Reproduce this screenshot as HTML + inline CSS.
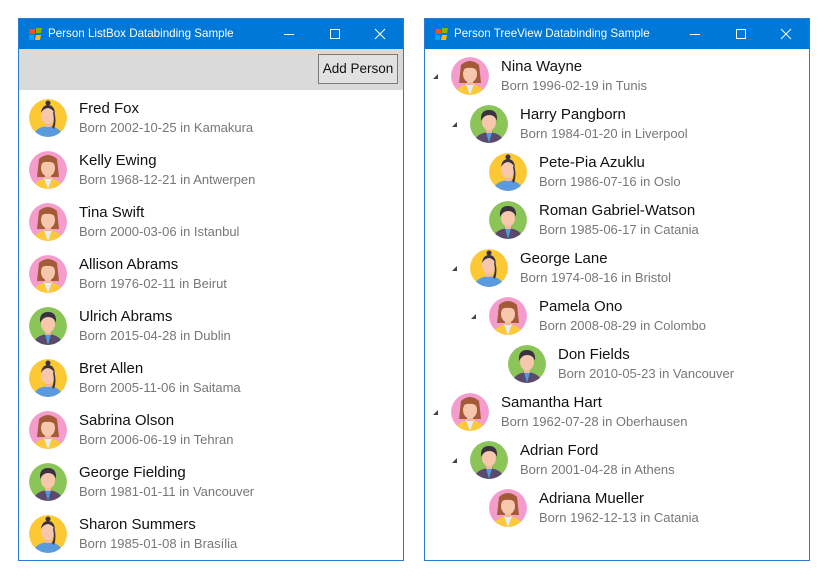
<!DOCTYPE html>
<html><head><meta charset="utf-8"><style>
body{margin:0;width:831px;height:581px;background:#fff;position:relative;overflow:hidden;font-family:"Segoe UI","Liberation Sans",sans-serif}
.win{position:absolute;top:18px;width:384px;height:541px;border:1px solid #2b7bd0;background:#fff}
.tb{position:absolute;left:0;top:0;right:0;height:30px;background:#0078d7;color:#fff;font-size:11.6px}
.tb .t{position:absolute;left:29px;top:8px}
.logo{position:absolute;left:10px;top:9px;width:13px;height:12px}
.ctl{position:absolute;top:0;height:30px;width:46px}
.tool{position:absolute;left:0;right:0;top:30px;height:41px;background:#dadada}
.btn{position:absolute;right:5px;top:5px;width:78px;height:28px;border:1px solid #7a7a7a;background:#e1e1e1;font-size:13.5px;line-height:28px;text-align:center;color:#111}
.it{position:absolute;height:48px}
.it svg{position:absolute;left:0;top:0;width:38px;height:38px}
.n{position:absolute;left:50px;top:1px;font-size:15px;color:#111;white-space:nowrap}
.s{position:absolute;left:50px;top:21px;font-size:13px;color:#777;white-space:nowrap}
.ar{position:absolute;width:0;height:0;border-left:5px solid transparent;border-bottom:5px solid #444}
</style></head><body>
<svg width="0" height="0" style="position:absolute">
<defs>
<clipPath id="c"><circle cx="19" cy="19" r="19"/></clipPath>
<symbol id="y" viewBox="0 0 38 38"><g clip-path="url(#c)"><circle cx="19" cy="19" r="19" fill="#fcc934"/><path d="M4 38 Q6 28 19 27 Q32 28 34 38Z" fill="#5a9be0"/><rect x="16" y="22" width="6" height="6" fill="#f2b79a"/><ellipse cx="19" cy="16" rx="7" ry="9" fill="#f7c7ad"/><path d="M12 14 Q13 6 19 6 Q25 6 26 14 Q22 9 19 9 Q15 9 12 14Z" fill="#3a3240"/><circle cx="19" cy="4" r="2.5" fill="#3a3240"/><path d="M25 12 Q28 22 25 30 L23 28 Q26 22 24 14Z" fill="#3a3240"/></g></symbol>
<symbol id="p" viewBox="0 0 38 38"><g clip-path="url(#c)"><circle cx="19" cy="19" r="19" fill="#f49ccc"/><path d="M10 8 Q19 0 28 8 L30 26 L8 26Z" fill="#a35a36"/><path d="M4 38 Q6 28 19 27 Q32 28 34 38Z" fill="#fbc93a"/><path d="M15 27 L19 38 L23 27Z" fill="#e3ecf7"/><rect x="16" y="22" width="6" height="6" fill="#f2b79a"/><ellipse cx="19" cy="17" rx="7" ry="8.5" fill="#f7c7ad"/><path d="M11 14 Q14 6 19 7 Q24 6 27 14 Q22 10 19 11 Q15 10 11 14Z" fill="#a35a36"/></g></symbol>
<symbol id="g" viewBox="0 0 38 38"><g clip-path="url(#c)"><circle cx="19" cy="19" r="19" fill="#8cc557"/><path d="M4 38 Q6 28 19 27 Q32 28 34 38Z" fill="#5c4a6e"/><path d="M16 27 L19 38 L22 27Z" fill="#4a9de0"/><rect x="16" y="22" width="6" height="6" fill="#f2b79a"/><ellipse cx="19" cy="17" rx="7" ry="8.5" fill="#f7c7ad"/><path d="M11 16 Q10 5 19 5 Q28 5 27 16 Q25 10 19 10 Q14 10 11 16Z" fill="#3a3240"/></g></symbol>
</defs></svg>

<div class="win" style="left:18px">
<div class="tb"><svg class="logo" viewBox="0 0 13 12"><path d="M1 1h5v5H0z" fill="#f25022"/><path d="M7 0h6l-1 5H7z" fill="#7fba00"/><path d="M0 7h5v5H0z" fill="#00a4ef"/><path d="M7 7h5l-1 5H6z" fill="#ffb900"/></svg><span class="t">Person ListBox Databinding Sample</span>
<svg class="ctl" style="left:247px" viewBox="0 0 46 30"><path d="M18 15.5h10" stroke="#fff"/></svg>
<svg class="ctl" style="left:293px" viewBox="0 0 46 30"><rect x="18.5" y="10.5" width="9" height="9" fill="none" stroke="#fff"/></svg>
<svg class="ctl" style="left:338px" viewBox="0 0 46 30"><path d="M18 10l10 10M28 10l-10 10" stroke="#fff"/></svg></div>
<div class="tool"><div class="btn">Add Person</div></div>
<div class="it" style="left:10px;top:80px"><svg><use href="#y"/></svg><div class="n">Fred Fox</div><div class="s">Born 2002-10-25 in Kamakura</div></div>
<div class="it" style="left:10px;top:132px"><svg><use href="#p"/></svg><div class="n">Kelly Ewing</div><div class="s">Born 1968-12-21 in Antwerpen</div></div>
<div class="it" style="left:10px;top:184px"><svg><use href="#p"/></svg><div class="n">Tina Swift</div><div class="s">Born 2000-03-06 in Istanbul</div></div>
<div class="it" style="left:10px;top:236px"><svg><use href="#p"/></svg><div class="n">Allison Abrams</div><div class="s">Born 1976-02-11 in Beirut</div></div>
<div class="it" style="left:10px;top:288px"><svg><use href="#g"/></svg><div class="n">Ulrich Abrams</div><div class="s">Born 2015-04-28 in Dublin</div></div>
<div class="it" style="left:10px;top:340px"><svg><use href="#y"/></svg><div class="n">Bret Allen</div><div class="s">Born 2005-11-06 in Saitama</div></div>
<div class="it" style="left:10px;top:392px"><svg><use href="#p"/></svg><div class="n">Sabrina Olson</div><div class="s">Born 2006-06-19 in Tehran</div></div>
<div class="it" style="left:10px;top:444px"><svg><use href="#g"/></svg><div class="n">George Fielding</div><div class="s">Born 1981-01-11 in Vancouver</div></div>
<div class="it" style="left:10px;top:496px"><svg><use href="#y"/></svg><div class="n">Sharon Summers</div><div class="s">Born 1985-01-08 in Brasília</div></div>
</div>

<div class="win" style="left:424px">
<div class="tb"><svg class="logo" viewBox="0 0 13 12"><path d="M1 1h5v5H0z" fill="#f25022"/><path d="M7 0h6l-1 5H7z" fill="#7fba00"/><path d="M0 7h5v5H0z" fill="#00a4ef"/><path d="M7 7h5l-1 5H6z" fill="#ffb900"/></svg><span class="t">Person TreeView Databinding Sample</span>
<svg class="ctl" style="left:247px" viewBox="0 0 46 30"><path d="M18 15.5h10" stroke="#fff"/></svg>
<svg class="ctl" style="left:293px" viewBox="0 0 46 30"><rect x="18.5" y="10.5" width="9" height="9" fill="none" stroke="#fff"/></svg>
<svg class="ctl" style="left:338px" viewBox="0 0 46 30"><path d="M18 10l10 10M28 10l-10 10" stroke="#fff"/></svg></div>
<div class="ar" style="left:8px;top:55px"></div>
<div class="it" style="left:26px;top:38px"><svg><use href="#p"/></svg><div class="n">Nina Wayne</div><div class="s">Born 1996-02-19 in Tunis</div></div>
<div class="ar" style="left:27px;top:103px"></div>
<div class="it" style="left:45px;top:86px"><svg><use href="#g"/></svg><div class="n">Harry Pangborn</div><div class="s">Born 1984-01-20 in Liverpool</div></div>
<div class="it" style="left:64px;top:134px"><svg><use href="#y"/></svg><div class="n">Pete-Pia Azuklu</div><div class="s">Born 1986-07-16 in Oslo</div></div>
<div class="it" style="left:64px;top:182px"><svg><use href="#g"/></svg><div class="n">Roman Gabriel-Watson</div><div class="s">Born 1985-06-17 in Catania</div></div>
<div class="ar" style="left:27px;top:247px"></div>
<div class="it" style="left:45px;top:230px"><svg><use href="#y"/></svg><div class="n">George Lane</div><div class="s">Born 1974-08-16 in Bristol</div></div>
<div class="ar" style="left:46px;top:295px"></div>
<div class="it" style="left:64px;top:278px"><svg><use href="#p"/></svg><div class="n">Pamela Ono</div><div class="s">Born 2008-08-29 in Colombo</div></div>
<div class="it" style="left:83px;top:326px"><svg><use href="#g"/></svg><div class="n">Don Fields</div><div class="s">Born 2010-05-23 in Vancouver</div></div>
<div class="ar" style="left:8px;top:391px"></div>
<div class="it" style="left:26px;top:374px"><svg><use href="#p"/></svg><div class="n">Samantha Hart</div><div class="s">Born 1962-07-28 in Oberhausen</div></div>
<div class="ar" style="left:27px;top:439px"></div>
<div class="it" style="left:45px;top:422px"><svg><use href="#g"/></svg><div class="n">Adrian Ford</div><div class="s">Born 2001-04-28 in Athens</div></div>
<div class="it" style="left:64px;top:470px"><svg><use href="#p"/></svg><div class="n">Adriana Mueller</div><div class="s">Born 1962-12-13 in Catania</div></div>
</div>
</body></html>
